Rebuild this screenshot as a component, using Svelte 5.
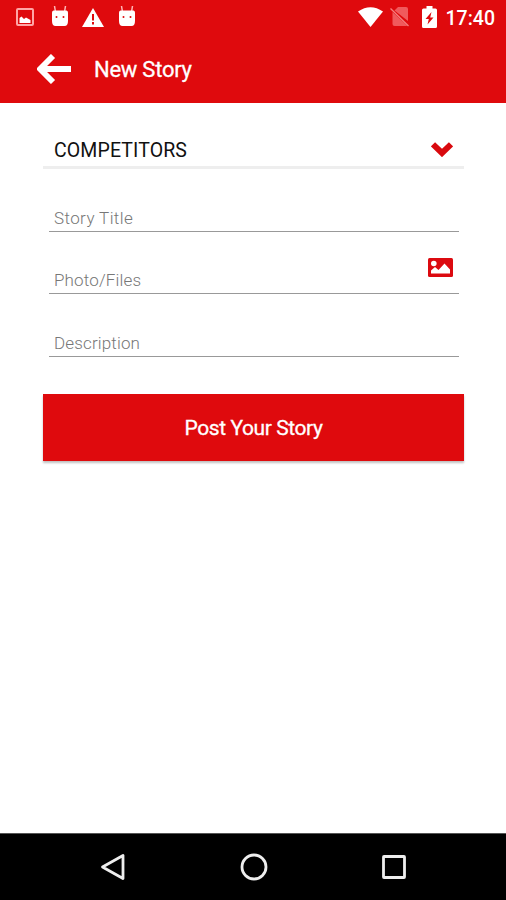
<script lang="ts">
  const fields = [
    { name: 'title', label: 'Story Title', picker: false },
    { name: 'photo', label: 'Photo/Files', picker: true },
    { name: 'description', label: 'Description', picker: false }
  ];
</script>

{#snippet droid()}
  <svg class="droid" width="20" height="20" viewBox="0 0 20 20">
    <path d="M4.500 0l1 6M15.500 0l-1 6" stroke="#ffb5b5" stroke-width="1.500" />
    <path d="M2 6.500Q2 5 3.500 4.500h13q1.500 .5 1.500 2v8.500Q18 20 14.500 20h-9Q2 20 2 15z" fill="#fff" />
    <circle cx="6.500" cy="11" r="1" fill="#df0a0d" />
    <circle cx="13.500" cy="11" r="1" fill="#df0a0d" />
  </svg>
{/snippet}

<div class="screen">
  <div class="statusBar">
    <div class="notifications">
      <svg width="18" height="18" viewBox="0 0 18 18">
        <rect x="1" y="1" width="16" height="16" rx="1" fill="none" stroke="#ffa5a5" stroke-width="2" />
        <path d="M3.500 15v-5l2-1.500 2.500 2.500 2-1.500 4.500 2.500v3z" fill="#fff" />
      </svg>
      {@render droid()}
      <svg width="22" height="19" viewBox="0 0 22 19">
        <path d="M11 0L22 19H0z" fill="#fff" />
        <path d="M11 6v6.500M11 14v2.500" stroke="#df0a0d" stroke-width="2" />
      </svg>
      {@render droid()}
    </div>
    <div class="system">
      <svg width="25" height="20" viewBox="0 0 25 20">
        <path d="M0 4.500Q12.500-4 25 4.500L12.500 20z" fill="#fff" />
      </svg>
      <svg width="20" height="20" viewBox="0 0 20 20">
        <path d="M8 0h8q2 0 2 2v12L4.500 3.500z" fill="#f05a5c" />
        <path d="M2.500 5L17 18.500q-.4 .5-1 .5H4.500q-2 0-2-2z" fill="#f05a5c" />
        <path d="M.5 1.500l18 17.500" stroke="#f58080" stroke-width="1.300" />
      </svg>
      <svg width="15" height="22" viewBox="0 0 15 22">
        <path d="M4.500 0h6v2.500h3q1.500 0 1.500 1.500v16.500q0 1.500-1.500 1.500h-12Q0 22 0 20.500V4q0-1.500 1.500-1.500h3z" fill="#fff" />
        <path d="M9.500 6L3.500 13h3.300L5.500 18.500l6-7H8.200z" fill="#df0a0d" />
      </svg>
      <span class="clock">17:40</span>
    </div>
  </div>

  <header>
    <button class="back" aria-label="Back">
      <svg width="34" height="30" viewBox="0 0 34 30">
        <path d="M16 2L3 15l13 13M3.500 15H34" fill="none" stroke="#fff" stroke-width="5.800" />
      </svg>
    </button>
    <h1>New Story</h1>
  </header>

  <main>
    <button class="category">
      <span>COMPETITORS</span>
      <svg width="22" height="15" viewBox="0 0 22 15">
        <path d="M2 2.300l9 8.700 9-8.700" fill="none" stroke="#d9090e" stroke-width="6" />
      </svg>
    </button>

    {#each fields as field (field.name)}
      <div class="field {field.name}">
        <span>{field.label}</span>
        {#if field.picker}
          <svg width="25" height="19" viewBox="0 0 25 19">
            <rect width="25" height="19" rx="1.500" fill="#dc0a10" />
            <circle cx="5.800" cy="5.500" r="2.800" fill="#fff" />
            <path d="M3 15.500v-3l4-3.500 3.500 3 6-6.500 5.500 6v4z" fill="#fff" />
          </svg>
        {/if}
      </div>
    {/each}

    <button class="post">Post Your Story</button>
  </main>

  <nav>
    <svg width="26" height="28" viewBox="0 0 26 28">
      <path d="M23 2.500v23L2.500 14z" fill="none" stroke="#eee" stroke-width="2.800" stroke-linejoin="round" />
    </svg>
    <svg width="28" height="28" viewBox="0 0 28 28">
      <circle cx="14" cy="14" r="12" fill="none" stroke="#eee" stroke-width="2.800" />
    </svg>
    <svg width="26" height="26" viewBox="0 0 26 26">
      <rect x="2.500" y="2.500" width="21" height="21" rx=".5" fill="none" stroke="#eee" stroke-width="2.800" />
    </svg>
  </nav>
</div>

<style>
  :global(body) {
    margin: 0;
    background: #fff;
  }

  .screen {
    display: flex;
    flex-direction: column;
    height: 900px;
    width: 506px;
    font-family: Roboto, sans-serif;
    overflow: hidden;
  }

  svg {
    display: block;
    flex: none;
  }

  button {
    border: none;
    padding: 0;
    margin: 0;
    background: transparent;
    font-family: inherit;
    cursor: pointer;
  }

  .statusBar {
    display: flex;
    justify-content: space-between;
    align-items: center;
    box-sizing: border-box;
    height: 34px;
    padding: 0 11px 0 16px;
    background: #df0a0d;
  }

  .notifications {
    display: flex;
    align-items: center;
    gap: 13px;
  }

  .notifications .droid {
    margin-top: -3px;
  }

  .notifications .droid:nth-child(2) {
    margin-left: 3px;
    margin-right: -1px;
  }

  .system {
    display: flex;
    align-items: center;
    gap: 9px;
  }

  .system svg:nth-child(1) {
    margin-right: -2px;
  }

  .system svg:nth-child(2) {
    margin-right: 3px;
  }

  .clock {
    font-size: 19.500px;
    line-height: 22px;
    font-weight: 500;
    color: #fff;
    margin-top: 3px;
  }

  header {
    display: flex;
    align-items: center;
    box-sizing: border-box;
    height: 69px;
    padding: 0 37px;
    gap: 23px;
    background: #df0a0d;
  }

  h1 {
    margin: 3px 0 0;
    font-size: 22px;
    line-height: 26px;
    font-weight: 400;
    letter-spacing: -0.250px;
    color: #fff;
    -webkit-text-stroke: 0.3px #fff;
  }

  main {
    display: flex;
    flex: 1;
    flex-direction: column;
    padding: 25px 42px 0 43px;
  }

  .category {
    display: flex;
    align-items: center;
    justify-content: space-between;
    box-sizing: border-box;
    height: 41px;
    padding: 0 11px;
    border-bottom: 3px solid #eee;
    font-size: 19.500px;
    letter-spacing: 0.120px;
    color: #111;
  }

  .category svg {
    margin-top: 4px;
  }

  .category span {
    margin-top: 6px;
  }

  .field {
    display: flex;
    align-items: flex-end;
    justify-content: space-between;
    box-sizing: border-box;
    height: 62px;
    margin: 0 5px 0 6px;
    padding: 0 6px 2px 5px;
    border-bottom: 1px solid #999;
    font-size: 17px;
    line-height: 22px;
    font-weight: 300;
    letter-spacing: 0.150px;
    color: #777;
  }

  .field.title {
    height: 63px;
    letter-spacing: 0.400px;
  }

  .field.description {
    height: 63px;
  }

  .field svg {
    margin-bottom: 14px;
  }

  .post {
    height: 67px;
    margin-top: 37px;
    background: #df0a0d;
    box-shadow: 0 2px 2px rgba(0, 0, 0, 0.25);
    color: #fff;
    font-size: 21px;
    letter-spacing: -0.420px;
    -webkit-text-stroke: 0.3px #fff;
  }

  nav {
    display: flex;
    align-items: center;
    justify-content: space-between;
    box-sizing: border-box;
    height: 67px;
    padding: 0 99px 0 100px;
    background: #000;
    border-top: 1px solid #555;
  }
</style>
